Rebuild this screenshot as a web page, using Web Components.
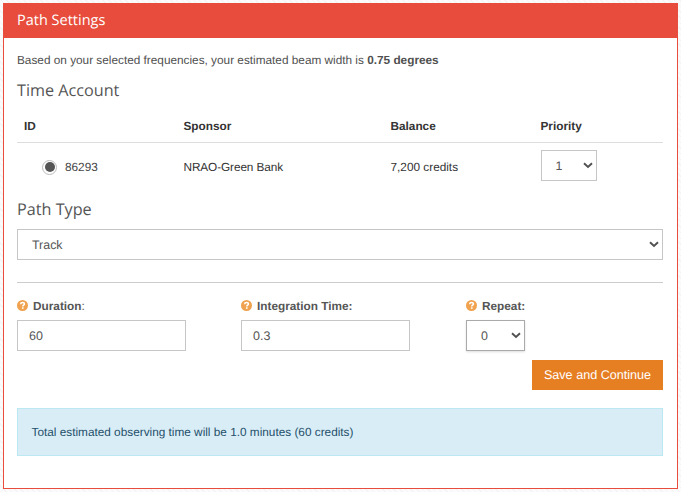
<!DOCTYPE html>
<html lang="en">
<head>
<meta charset="utf-8">
<title>Path Settings</title>
<style>
html, body { margin: 0; height: 100%; }
body {
  box-sizing: border-box; padding: 3px; overflow: hidden;
  font: 11.81px/16px "Liberation Sans", Arial, sans-serif; color: #4f4f4f;
  text-rendering: geometricPrecision;
  background: #fafafb repeating-linear-gradient(45deg, #f4f4f6 0 1px, #fbfbfc 1px 4px);
}
</style>
</head>
<body>
<path-settings></path-settings>
<script>
const define = (name, html) => customElements.define(name, class extends HTMLElement {
  constructor() {
    super();
    const t = document.createElement('template');
    t.innerHTML = html;
    this.attachShadow({ mode: 'open' }).append(t.content.cloneNode(true));
  }
});

define('settings-panel', `<style>
:host { display: flex; flex-direction: column; box-sizing: border-box; width: 675px; height: 486px; border: 1px solid #e74c3c; background: #fff; }
header { height: 34px; box-sizing: border-box; flex: none; padding-left: 13px; background: #e74c3c; color: #fff; font: 14.5px/33px "Open Sans", sans-serif; }
section { padding: 0 14px 0 13px; display: flex; flex-direction: column; }
</style><header><slot name="title"></slot></header><section><slot></slot></section>`);

define('section-title', `<style>
:host { display: block; height: 24px; font: 16.2px/24px "Open Sans", sans-serif; color: #555; }
</style><slot></slot>`);

define('drop-down', `<style>
:host { display: flex; align-items: center; justify-content: space-between; box-sizing: border-box; height: 31px; padding: 0 3px 0 14px; border: 1px solid #c6c6c6; background: #fff; color: #555; font-size: 12.4px; }
svg { display: block; width: 10px; height: 7px; }
</style><span><slot></slot></span><svg viewBox="0 0 10 7"><path d="M1 1.3 5 5 9 1.3" fill="none" stroke="#505050" stroke-width="1.9"/></svg>`);

define('text-box', `<style>
:host { display: block; box-sizing: border-box; height: 31px; padding: 0 11px; border: 1px solid #c6c6c6; background: #fff; line-height: 30px; color: #555; font-size: 12.5px; }
</style><slot></slot>`);

define('radio-dot', `<style>
:host { display: block; box-sizing: border-box; width: 15px; height: 15px; border: 1px solid #bbb; border-radius: 50%; padding: 1.5px; }
i { display: block; width: 10px; height: 10px; border-radius: 50%; background: #555; }
</style><i></i>`);

define('help-mark', `<style>
:host { display: block; width: 11px; height: 11px; }
svg { display: block; }
</style><svg width="11" height="11" viewBox="0 0 11 11"><circle cx="5.5" cy="5.5" r="5.5" fill="#f0a24f"/><path d="M3.6 4.2C3.7 2.9 4.5 2.5 5.5 2.5c1.1 0 1.9.6 1.9 1.5 0 1.2-1.6 1.2-1.6 2.4" fill="none" stroke="#fff" stroke-width="1.5"/><path d="M4.9 7.3h1.7v1.5H4.9z" fill="#fff"/></svg>`);

define('form-field', `<style>
:host { display: flex; flex-direction: column; }
div { display: flex; height: 16px; gap: 5px; align-items: center; margin-bottom: 6px; font-weight: bold; color: #555; white-space: nowrap; }
help-mark { margin-bottom: 2px; }
</style><div><help-mark></help-mark><span><slot name="label"></slot></span></div><slot></slot>`);

define('account-table', `<style>
:host { display: block; color: #333; }
.row { display: grid; grid-template-columns: 159.5px 207px 150px 1fr; padding-left: 7px; align-items: center; }
.head { height: 32px; border-bottom: 1px solid #ddd; font-weight: bold; }
.body { height: 48px; }
.id { display: flex; align-items: center; gap: 8px; padding-left: 18px; color: #444; }
.sponsor { letter-spacing: -0.1px; }
drop-down { width: 56px; margin-top: -3px; }
</style>
<div class="row head"><span>ID</span><span>Sponsor</span><span>Balance</span><span>Priority</span></div>
<div class="row body"><span class="id"><radio-dot></radio-dot>86293</span><span class="sponsor">NRAO-Green Bank</span><span>7,200 credits</span><drop-down>1</drop-down></div>`);

define('action-button', `<style>
:host { display: block; width: 131px; height: 30px; background: #e67e22; color: #fff; text-align: center; line-height: 30px; font-size: 12.6px; }
</style><slot></slot>`);

define('info-alert', `<style>
:host { display: block; box-sizing: border-box; height: 48px; padding-left: 13.5px; border: 1px solid #bce8f1; background: #d9edf7; color: #1f506a; line-height: 47px; }
</style><slot></slot>`);

define('path-settings', `<style>
:host { display: block; }
p { margin: 12px 0 8px; height: 20px; line-height: 20px; }
.type { margin-top: 6px; }
.track { margin-top: 8px; }
hr { width: 100%; height: 1px; margin: 22px 0 15px; border: 0; background: #ccc; }
.fields { display: grid; grid-template-columns: 224px 225px 59px; }
.wide { width: 169px; }
.repeat { border-color: #aaa; box-shadow: 0 1px 2px #0002; }
action-button { align-self: flex-end; margin: 9px 0 18px; }
account-table { margin-top: 8px; }
</style>
<settings-panel><span slot="title">Path Settings</span>
<p>Based on your selected frequencies, your estimated beam width is <b>0.75 degrees</b></p>
<section-title>Time Account</section-title>
<account-table></account-table>
<section-title class="type">Path Type</section-title>
<drop-down class="track">Track</drop-down>
<hr>
<div class="fields">
<form-field><span slot="label">Duration<span style="font-weight:normal">:</span></span><text-box class="wide">60</text-box></form-field>
<form-field><span slot="label">Integration Time:</span><text-box class="wide">0.3</text-box></form-field>
<form-field><span slot="label">Repeat:</span><drop-down class="repeat">0</drop-down></form-field>
</div>
<action-button>Save and Continue</action-button>
<info-alert>Total estimated observing time will be 1.0 minutes (60 credits)</info-alert>
</settings-panel>`);
</script>
</body>
</html>
